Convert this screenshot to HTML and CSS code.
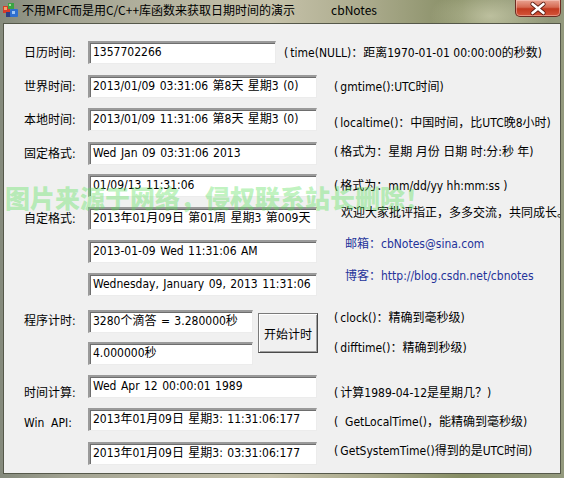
FILE: index.html
```html
<!DOCTYPE html>
<html lang="zh-CN">
<head>
<meta charset="utf-8">
<title>不用MFC而是用C/C++库函数来获取日期时间的演示</title>
<link rel="stylesheet" href="styles.css">
</head>
<body>
<div class="window">
  <div class="titlebar">
    <svg class="app-icon" width="15" height="15" viewBox="0 0 15 15">
      <rect x="0" y="3" width="7" height="7" fill="#d63a2a"/>
      <rect x="1" y="4" width="3" height="3" fill="#f3a36a"/>
      <rect x="5" y="0" width="6" height="6" fill="#3aa443"/>
      <rect x="6" y="1" width="2" height="2" fill="#a6e09a"/>
      <rect x="3" y="9" width="5" height="5" fill="#2c3e86"/>
      <rect x="7" y="6" width="8" height="8" rx="1" fill="#2f6fd0"/>
      <rect x="9" y="8" width="3" height="3" fill="#9fc6f5"/>
    </svg>
    <span class="title">不用MFC而是用C/C++库函数来获取日期时间的演示</span>
    <span class="title-author">cbNotes</span>
    <div class="close">
      <svg width="46" height="17" viewBox="0 0 46 17">
        <path d="M17.5 4 L28.5 13 M28.5 4 L17.5 13" stroke="#5a1a10" stroke-width="4.2" stroke-linecap="round"/>
        <path d="M17.5 4 L28.5 13 M28.5 4 L17.5 13" stroke="#ffffff" stroke-width="2.6" stroke-linecap="round"/>
      </svg>
    </div>
  </div>
  <div class="client">
    <div class="row">
      <span class="label">日历时间:</span>
      <div class="field w186">1357702266</div>
      <span class="note ml8">(&#8201;time(NULL)：距离1970-01-01 00:00:00的秒数)</span>
    </div>
    <div class="row g11">
      <span class="label">世界时间:</span>
      <div class="field w228">2013/01/09 03:31:06 第8天 星期3 (0)</div>
      <span class="note">(&#8201;gmtime():UTC时间)</span>
    </div>
    <div class="row g10">
      <span class="label">本地时间:</span>
      <div class="field w228">2013/01/09 11:31:06 第8天 星期3 (0)</div>
      <span class="note dn7">(&#8201;localtime()：中国时间，比UTC晚8小时)</span>
    </div>
    <div class="row g11">
      <span class="label">固定格式:</span>
      <div class="field w228">Wed Jan 09 03:31:06 2013</div>
      <span class="note up3">(&#8201;格式为：星期 月份 日期 时:分:秒 年)</span>
    </div>
    <div class="row g9">
      <span class="label"></span>
      <div class="field w228">01/09/13 11:31:06</div>
      <span class="note">(&#8201;格式为：mm/dd/yy hh:mm:ss )</span>
    </div>
    <div class="row g10">
      <span class="label">自定格式:</span>
      <div class="field w228">2013年01月09日 第01周 星期3 第009天</div>
      <span class="note ml24 up12">欢迎大家批评指正，多多交流，共同成长。</span>
    </div>
    <div class="row g10">
      <span class="label"></span>
      <div class="field w228">2013-01-09 Wed 11:31:06 AM</div>
      <span class="note link ml28 up16">邮箱：cbNotes@sina.com</span>
    </div>
    <div class="row g10">
      <span class="label"></span>
      <div class="field w228">Wednesday, January 09, 2013 11:31:06</div>
      <span class="note link ml28 up18">博客：http://blog.csdn.net/cbnotes</span>
    </div>
    <div class="timer g14">
      <span class="label timer-label">程序计时:</span>
      <div class="stack">
        <div class="field w164">3280个滴答 = 3.280000秒</div>
        <div class="field w164">4.000000秒</div>
      </div>
      <button class="btn" type="button">开始计时</button>
      <div class="notes-stack">
        <span class="note-line">(&#8201;clock()：精确到毫秒级)</span>
        <span class="note-line second">(&#8201;difftime()：精确到秒级)</span>
      </div>
    </div>
    <div class="row g10">
      <span class="label dn12">时间计算:</span>
      <div class="field w228">Wed Apr 12 00:00:01 1989</div>
      <span class="note dn12">(&#8201;计算1989-04-12是星期几？)</span>
    </div>
    <div class="row g10">
      <span class="label dn6 pre">Win  API:</span>
      <div class="field w228">2013年01月09日 星期3: 11:31:06:177</div>
      <span class="note dn4">(  GetLocalTime()，能精确到毫秒级)</span>
    </div>
    <div class="row g11">
      <span class="label"></span>
      <div class="field w228">2013年01月09日 星期3: 03:31:06:177</div>
      <span class="note up5">(&#8201;GetSystemTime()得到的是UTC时间)</span>
    </div>
    <div class="watermark">图片来源于网络，侵权联系站长删除！</div>
  </div>
</div>
</body>
</html>
```

FILE: styles.css
```css
html, body {
  margin: 0;
  padding: 0;
}

body {
  width: 564px;
  height: 478px;
  overflow: hidden;
}

.window {
  width: 564px;
  height: 478px;
  box-sizing: border-box;
  padding: 0 3px 4px 3px;
  display: flex;
  flex-direction: column;
  background:
    radial-gradient(ellipse 60px 30px at 490px 16px, rgba(230, 230, 200, 0.55), rgba(230, 230, 200, 0) 100%),
    linear-gradient(90deg, #858a7c 0%, #a2a392 12%, #b6b4a0 30%, #c6c2aa 48%, #a9a98a 66%, #868d64 82%, #949a7e 100%);
}

.titlebar {
  height: 23px;
  display: flex;
  align-items: flex-start;
  flex-shrink: 0;
}

.app-icon {
  margin-top: 3px;
  flex-shrink: 0;
}

.title {
  margin-left: 4px;
  font-family: "Noto Sans CJK SC", "DejaVu Sans", sans-serif;
  font-size: 12px;
  line-height: 20px;
  color: #000;
  white-space: nowrap;
}

.title-author {
  margin-left: 36px;
  font-family: "Noto Sans CJK SC", "DejaVu Sans", sans-serif;
  font-size: 12px;
  line-height: 20px;
  color: #000;
}

.close {
  margin-left: auto;
  width: 46px;
  height: 17px;
  box-sizing: border-box;
  border: 1px solid #6b2c22;
  border-top: none;
  border-radius: 0 0 5px 5px;
  background: linear-gradient(180deg, #e9a392 0%, #d66a52 45%, #c2391f 55%, #d4553a 100%);
  box-shadow: inset 0 0 0 1px rgba(255, 220, 210, 0.45);
  overflow: hidden;
}

.close svg {
  display: block;
  margin-left: -1px;
}

.client {
  flex: 1;
  position: relative;
  background: #f0f0f0;
  border: 1px solid #55584a;
  padding: 17px 0 0 20px;
  display: flex;
  flex-direction: column;
  overflow: hidden;
  font-family: "DejaVu Sans Condensed", "DejaVu Sans", "Noto Sans CJK SC", sans-serif;
  font-size: 12px;
  color: #000;
}

.row {
  display: flex;
  align-items: center;
  height: 23px;
  flex-shrink: 0;
}

.g9 { margin-top: 9px; }
.g10 { margin-top: 10px; }
.g11 { margin-top: 11px; }
.g14 { margin-top: 14px; }

.label {
  width: 64px;
  flex-shrink: 0;
  line-height: 14px;
  white-space: nowrap;
}

.pre { white-space: pre; }

.field {
  box-sizing: border-box;
  height: 23px;
  flex-shrink: 0;
  background: #fff;
  border-style: solid;
  border-width: 2px 1px 1px 2px;
  border-color: #9a9a9a #ececec #ececec #9a9a9a;
  box-shadow: inset 1px 1px 0 #6e6e6e;
  padding-left: 3px;
  line-height: 19px;
  white-space: nowrap;
  overflow: hidden;
  word-spacing: 1px;
}

.w164 { width: 165px; }
.w186 { width: 188px; }
.w228 { width: 229px; }

.note {
  margin-left: 17px;
  line-height: 14px;
  white-space: pre;
}

.ml8 { margin-left: 8px; }
.ml24 { margin-left: 24px; }
.ml28 { margin-left: 28px; }

.link { color: #24339a; }

.dn4 { margin-top: 4px; }
.dn6 { margin-top: 6px; }
.dn7 { margin-top: 7px; }
.dn12 { margin-top: 12px; }
.up3 { margin-bottom: 3px; }
.up5 { margin-bottom: 5px; }
.up12 { margin-bottom: 12px; }
.up16 { margin-bottom: 16px; }
.up18 { margin-bottom: 18px; }

.timer {
  display: flex;
  align-items: flex-start;
  height: 55px;
  flex-shrink: 0;
}

.timer-label {
  line-height: 23px;
}

.stack {
  display: flex;
  flex-direction: column;
  gap: 9px;
}

.btn {
  width: 60px;
  height: 40px;
  margin: 3px 0 0 5px;
  padding: 0;
  box-sizing: border-box;
  background: #f0f0f0;
  border: 1px solid #7a7a7a;
  border-right-color: #4a4a4a;
  border-bottom-color: #4a4a4a;
  box-shadow: inset 1px 1px 0 #ffffff, inset -1px -1px 0 #a0a0a0;
  font-family: "DejaVu Sans Condensed", "DejaVu Sans", "Noto Sans CJK SC", sans-serif;
  font-size: 12px;
  color: #000;
}

.notes-stack {
  display: flex;
  flex-direction: column;
  margin-left: 16px;
  padding-top: 1px;
}

.note-line {
  line-height: 14px;
  white-space: nowrap;
}

.note-line.second {
  margin-top: 16px;
}

.watermark {
  position: absolute;
  left: 1px;
  top: 161px;
  font-family: "Noto Sans CJK SC", sans-serif;
  font-weight: 900;
  font-size: 25px;
  line-height: 25px;
  color: rgba(90, 225, 90, 0.4);
  white-space: nowrap;
  pointer-events: none;
}
```
